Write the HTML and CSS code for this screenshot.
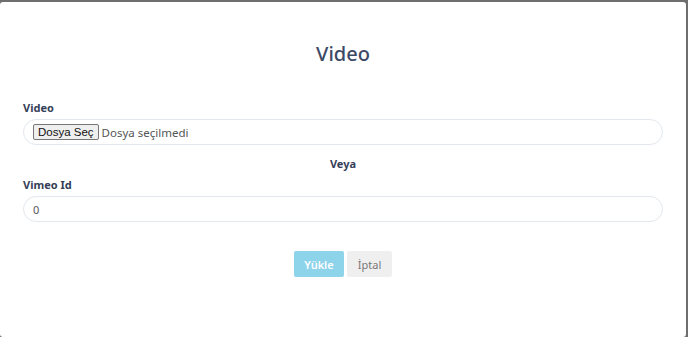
FILE: index.html
```html
<!DOCTYPE html>
<html lang="tr">
<head>
    <meta charset="UTF-8">
    <meta name="viewport" content="width=device-width, initial-scale=1.0">
    <title>Video</title>
    <link rel="stylesheet" href="styles.css">
</head>
<body>
    <div class="modal">
        <h2 class="modal-title">Video</h2>

        <form class="upload-form">
            <div class="field">
                <label class="field-label" for="videoFile">Video</label>
                <div class="pill-input">
                    <span class="file-button">Dosya Seç</span>
                    <span class="file-name">Dosya seçilmedi</span>
                </div>
            </div>

            <div class="separator">Veya</div>

            <div class="field">
                <label class="field-label" for="vimeoId">Vimeo Id</label>
                <input class="pill-input" id="vimeoId" type="text" value="0">
            </div>

            <div class="actions">
                <button type="button" class="button button-primary">Yükle</button>
                <button type="button" class="button button-light">İptal</button>
            </div>
        </form>
    </div>
</body>
</html>
```

FILE: styles.css
```css
:root {
    --backdrop: #6e6e6e;
    --title: #3c4a66;
    --label: #354058;
    --border: #e2e8ee;
    --primary: #8dd3ea;
    --light: #efefef;
}

html, body {
    margin: 0;
    padding: 0;
    height: 100%;
}

body {
    background-color: var(--backdrop);
    font-family: 'Noto Sans', 'Open Sans', sans-serif;
    overflow: hidden;
}

.modal {
    box-sizing: border-box;
    width: 686px;
    height: 335px;
    margin-top: 2px;
    background-color: #fff;
    border-radius: 3px;
    padding: 0 23px;
}

.modal-title {
    margin: 0;
    padding-top: 38px;
    height: 54px;
    text-align: center;
    font-size: 20px;
    font-weight: 500;
    line-height: 28px;
    color: var(--title);
}

.upload-form {
    display: flex;
    flex-direction: column;
    padding-top: 6px;
}

.field {
    display: flex;
    flex-direction: column;
}

.field-label {
    font-size: 11px;
    font-weight: 700;
    color: var(--label);
    line-height: 15px;
    margin-bottom: 4px;
}

.pill-input {
    box-sizing: border-box;
    width: 640px;
    height: 26px;
    border: 1px solid var(--border);
    border-radius: 13px;
    padding: 0 9px;
    display: flex;
    align-items: center;
    background-color: #fff;
    font-family: 'Noto Sans', sans-serif;
    font-size: 11px;
    color: #555;
}

input.pill-input {
    outline: none;
}

.file-button {
    font-family: 'Liberation Sans', Arial, sans-serif;
    font-size: 11.5px;
    color: #111;
    background-color: #efefef;
    border: 1px solid #767676;
    border-radius: 2px;
    padding: 0 4px;
    height: 14px;
    line-height: 14px;
    margin-right: 3px;
}

.file-name {
    font-size: 11.5px;
    color: #555;
}

.separator {
    text-align: center;
    font-size: 11px;
    font-weight: 700;
    color: var(--label);
    line-height: 15px;
    margin-top: 11px;
    margin-bottom: 6px;
}

.actions {
    display: flex;
    justify-content: center;
    gap: 3px;
    margin-top: 29px;
}

.button {
    height: 26px;
    border: none;
    border-radius: 2px;
    font-family: 'Noto Sans', sans-serif;
    font-size: 11px;
    font-weight: 600;
    padding: 0 10px;
    cursor: pointer;
}

.button-primary {
    background-color: var(--primary);
    color: #fff;
    width: 50px;
}

.button-light {
    background-color: var(--light);
    color: #777;
    font-weight: 400;
    width: 45px;
}
```
